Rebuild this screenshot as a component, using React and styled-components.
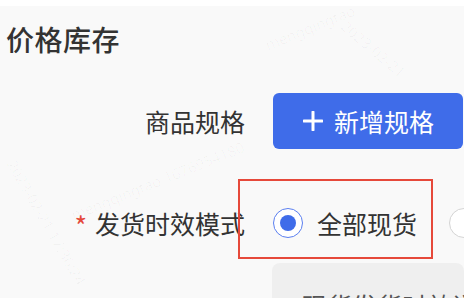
import styled, { createGlobalStyle } from 'styled-components';

const GlobalStyle = createGlobalStyle`
  html, body {
    margin: 0;
    padding: 0;
    background: #f9f9f9;
  }
  body {
    font-family: "Noto Sans CJK SC", "Noto Sans", sans-serif;
    overflow: hidden;
  }
`;

const Page = styled.div`
  position: relative;
  width: 464px;
  height: 298px;
  overflow: hidden;
  background: #f9f9f9;
  border-top: 6px solid #ffffff;
  box-sizing: border-box;
`;

const Title = styled.h2`
  margin: 13px 0 0 6px;
  font-size: 28px;
  line-height: 40px;
  font-weight: 500;
  color: #333;
  letter-spacing: 0.5px;
`;

const FormRow = styled.div`
  display: grid;
  grid-template-columns: 245px 1fr;
  column-gap: 28px;
  align-items: center;
  margin-top: ${(p) => p.$top}px;
  position: relative;
`;

const Label = styled.div`
  text-align: right;
  font-size: 25px;
  line-height: 32px;
  color: #333;
  white-space: nowrap;
  display: flex;
  justify-content: flex-end;
  align-items: center;
`;

const Required = styled.span`
  color: #e5493a;
  font-size: 27px;
  margin-right: 8px;
  margin-top: 6px;
`;

const AddButton = styled.button`
  display: flex;
  align-items: center;
  gap: 11px;
  width: 190px;
  height: 56px;
  padding: 0 0 0 30px;
  border: none;
  border-radius: 6px;
  background: #3f6ce9;
  color: #fff;
  font-family: inherit;
  font-size: 25px;
  white-space: nowrap;
  box-sizing: border-box;
`;

const RadioGroup = styled.div`
  display: flex;
  align-items: center;
  height: 56px;
  gap: 32px;
  white-space: nowrap;
  overflow: hidden;
`;

const RadioOption = styled.label`
  display: flex;
  align-items: center;
  gap: 14px;
  font-size: 25px;
  color: #333;
`;

const RadioCircle = styled.span`
  width: 30px;
  height: 30px;
  box-sizing: border-box;
  border-radius: 50%;
  border: 1.5px solid ${(p) => (p.$checked ? '#5b7ff0' : '#d4d4d4')};
  background: #fff;
  display: flex;
  align-items: center;
  justify-content: center;
  flex-shrink: 0;

  &::after {
    content: '';
    width: 16px;
    height: 16px;
    border-radius: 50%;
    background: #3f6ce9;
    display: ${(p) => (p.$checked ? 'block' : 'none')};
  }
`;

const Highlight = styled.div`
  position: absolute;
  left: 238px;
  top: -16px;
  width: 195px;
  height: 80px;
  border: 2px solid #e6493a;
  box-sizing: border-box;
  pointer-events: none;
`;

const InfoBox = styled.div`
  margin: 12px 0 0 272px;
  height: 60px;
  border-radius: 8px;
  background: #efefef;
  padding: 26px 0 0 30px;
  box-sizing: border-box;
  font-size: 25px;
  line-height: 32px;
  color: #555;
  white-space: nowrap;
  overflow: hidden;
`;

const Watermark = styled.span`
  position: absolute;
  left: ${(p) => p.$x}px;
  top: ${(p) => p.$y}px;
  transform: rotate(${(p) => p.$r}deg);
  transform-origin: left top;
  font-family: "Noto Sans", sans-serif;
  font-size: 15px;
  color: rgba(0, 0, 0, 0.03);
  white-space: nowrap;
  pointer-events: none;
`;

const PlusIcon = () => (
  <svg width="20" height="20" viewBox="0 0 20 20">
    <path d="M10 1v18M1 10h18" stroke="#fff" strokeWidth="3" strokeLinecap="round" />
  </svg>
);

export default function App() {
  return (
    <>
      <GlobalStyle />
      <Page>
        <Title>价格库存</Title>

        <FormRow $top={34}>
          <Label>商品规格</Label>
          <div>
            <AddButton>
              <PlusIcon />
              新增规格
            </AddButton>
          </div>
        </FormRow>

        <FormRow $top={46}>
          <Label>
            <Required>*</Required>
            发货时效模式
          </Label>
          <RadioGroup>
            <RadioOption>
              <RadioCircle $checked />
              全部现货
            </RadioOption>
            <RadioOption>
              <RadioCircle />
              部分预售
            </RadioOption>
          </RadioGroup>
          <Highlight />
        </FormRow>

        <InfoBox>现货发货时效说明</InfoBox>

        <Watermark $x={262} $y={30} $r={-22}>mengqingtao</Watermark>
        <Watermark $x={68} $y={200} $r={-22}>mengqingtao 1676954180</Watermark>
        <Watermark $x={350} $y={10} $r={40}>2023-02-21</Watermark>
        <Watermark $x={20} $y={150} $r={60}>2023-02-21 17:36:24</Watermark>
      </Page>
    </>
  );
}
